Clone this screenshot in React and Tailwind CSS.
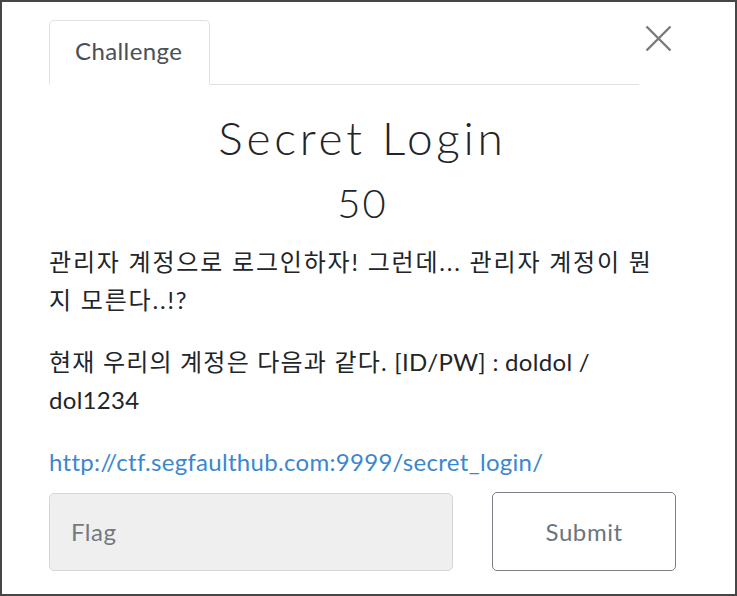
import React from 'react';

// CTFd style challenge modal

const Close = () => (
  <svg width="27" height="27" viewBox="0 0 27 27" fill="none" stroke="#7a7a7a" strokeWidth="2.4" strokeLinecap="butt">
    <path d="M1.5 1.5 L25.5 25.5 M25.5 1.5 L1.5 25.5" />
  </svg>
);

export default function App() {
  return (
    <div className="w-[737px] h-[596px] bg-white border-2 border-[#464646] font-['Lato','Noto_Sans_CJK_KR',sans-serif] text-[#212529]">
      <div className="pl-[47px] pr-[59px] pt-[18px]">
        {/* Tabs + close */}
        <div className="flex items-start">
          <div className="w-[590px] flex border-b border-[#dee2e6]">
            <div className="-mb-px w-[161px] h-[65px] border border-[#dee2e6] border-b-white rounded-t-[5px] bg-white pl-[25px] pt-[17px] text-[24px] leading-[26px] tracking-[0.4px] text-[#495057]">
              Challenge
            </div>
          </div>
          <button className="ml-[6px] mt-[5px]">
            <Close />
          </button>
        </div>

        {/* Title */}
        <h2 className="mt-[25px] text-center text-[46px] leading-[56px] tracking-[3.8px] font-light">Secret Login</h2>
        <h3 className="mt-[13px] text-center text-[40px] leading-[48px] tracking-[2px] font-light">50</h3>

        {/* Description */}
        <div className="mt-[16px] whitespace-nowrap text-[24px] leading-[38px] tracking-[0.3px] text-[#212529]">
          <p className="tracking-[1.8px]">
            관리자 계정으로 로그인하자! 그런데... 관리자 계정이 뭔
            <br />
            지 모른다..!?
          </p>
          <p className="mt-[24px]">
            <span className="tracking-[1.2px]">현재 우리의 계정은 다음과 같다.</span> [ID/PW] : doldol /
            <br />
            dol1234
          </p>
          <p className="mt-[24px]">
            <a href="#" className="text-[#3b87cf]">http://ctf.segfaulthub.com:9999/secret_login/</a>
          </p>
        </div>

        {/* Flag form */}
        <div className="mt-[11px] flex items-center">
          <div className="w-[405px] h-[78px] bg-[#efefef] border border-[#d3d6d9] rounded-[5px] flex items-center px-[21px] text-[24px] tracking-[0.5px] text-[#72797f]">
            Flag
          </div>
          <button className="ml-[39px] w-[184px] h-[79px] border-[1.5px] border-[#7a8086] rounded-[5px] text-[24px] tracking-[0.6px] text-[#6c757d]">
            Submit
          </button>
        </div>
      </div>
    </div>
  );
}
